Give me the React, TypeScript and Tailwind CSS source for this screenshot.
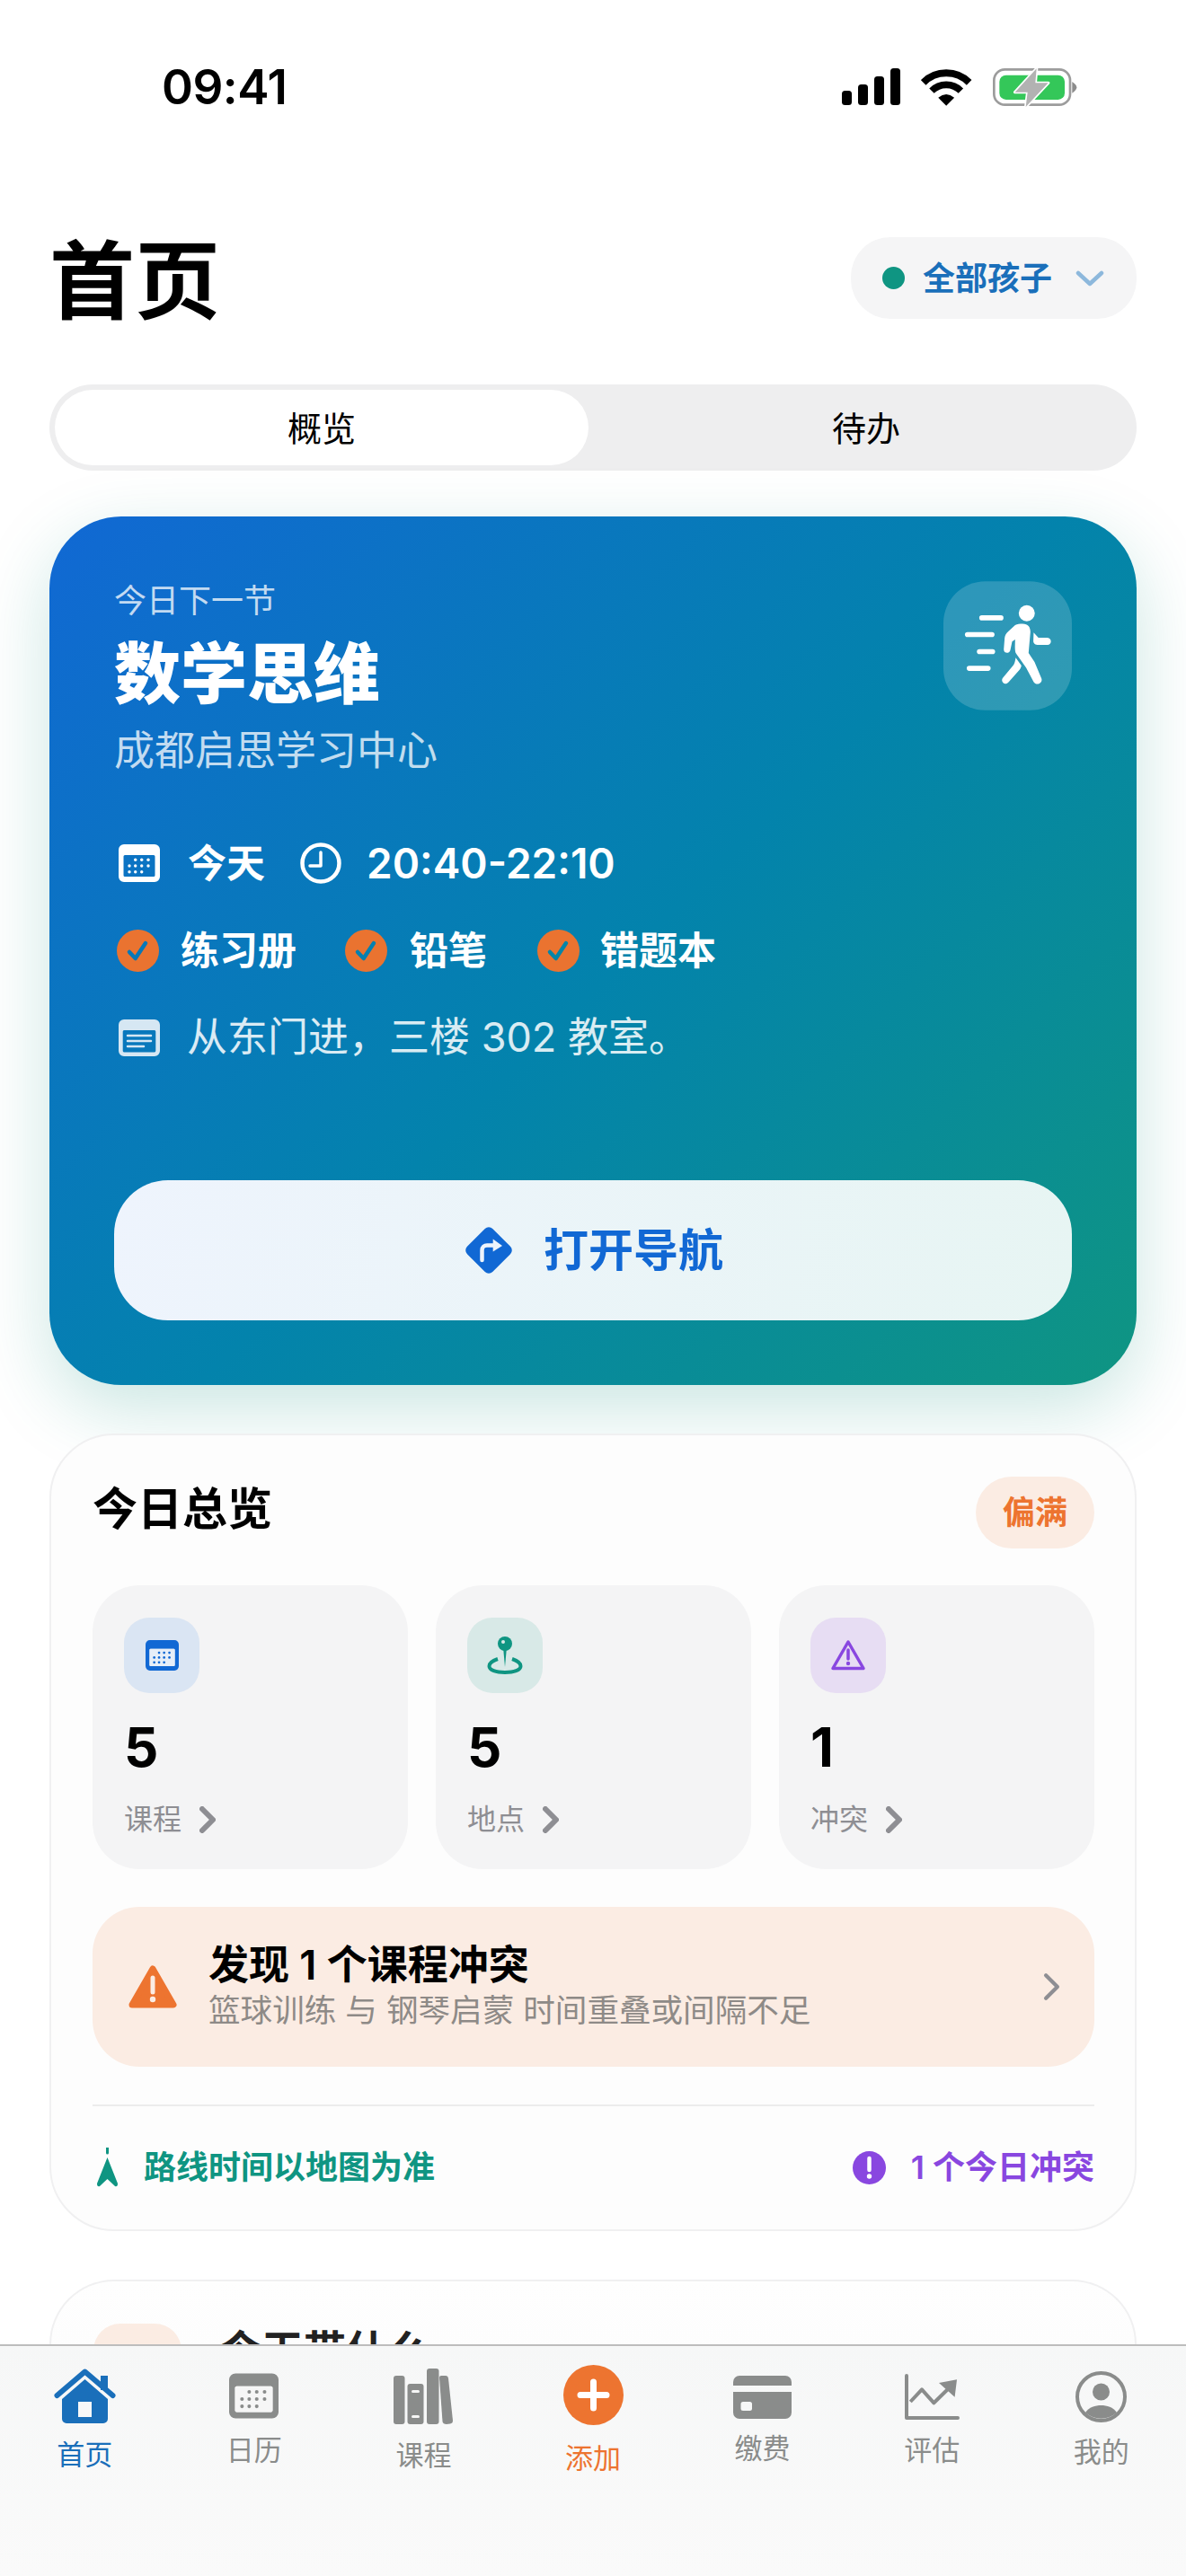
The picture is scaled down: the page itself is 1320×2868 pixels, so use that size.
import React from "react";

const GRAY = "#8a8c8b";

function Chevron({ className = "", color = "#8e8e93", w = 6 }: { className?: string; color?: string; w?: number }) {
  return (
    <svg viewBox="0 0 18 30" className={className} fill="none">
      <path d="M3 3 L15 15 L3 27" stroke={color} strokeWidth={w} strokeLinecap="round" strokeLinejoin="round" />
    </svg>
  );
}

function Cal({ className, frame, inner, dot }: { className: string; frame: string; inner?: string; dot: string }) {
  const pts: [number, number][] = [
    [18.7, 17.3], [25.7, 17.3], [33, 17.3],
    [12, 24], [18.7, 24], [25.7, 24], [33, 24],
    [12, 30.7], [18.7, 30.7], [25.7, 30.7],
  ];
  return (
    <svg viewBox="0 0 46 42" className={className}>
      <path
        fillRule="evenodd"
        fill={frame}
        d="M6 0H40A6 6 0 0 1 46 6V36A6 6 0 0 1 40 42H6A6 6 0 0 1 0 36V6A6 6 0 0 1 6 0ZM7 12A1.5 1.5 0 0 0 5.500 13.500V34.500A1.500 1.500 0 0 0 7 36H39A1.500 1.500 0 0 0 40.500 34.500V13.500A1.500 1.500 0 0 0 39 12Z"
      />
      {inner && <rect x="5.5" y="12" width="35" height="24" rx="1.500" fill={inner} />}
      {pts.map((p, i) => (
        <circle key={i} cx={p[0]} cy={p[1]} r="1.700" fill={dot} />
      ))}
    </svg>
  );
}

function Check({ stroke }: { stroke: string }) {
  return (
    <svg viewBox="0 0 47 47" className="h-[47px] w-[47px] shrink-0">
      <circle cx="23.5" cy="23.5" r="23.5" fill="#ea7330" />
      <path d="M14 25 L20.700 32 L32 15" fill="none" stroke={stroke} strokeWidth="4.500" strokeLinecap="round" strokeLinejoin="round" />
    </svg>
  );
}

function Walker() {
  return (
    <svg viewBox="450 200 430 432" className="h-[144px] w-[143px]">
      <rect x="450" y="200" width="430" height="432" rx="140" fill="#ffffff" fillOpacity="0.17" />
      <g fill="#fff">
        <rect x="570" y="314" width="81" height="17" rx="8.500" />
        <rect x="522" y="370" width="99" height="17" rx="8.500" />
        <rect x="562" y="427" width="61" height="17" rx="8.500" />
        <rect x="528" y="483" width="80" height="17" rx="8.500" />
        <circle cx="729" cy="307" r="27" />
        <path d="M715 342C735 342 742 355 741 372L735 440L755 470L778 525C784 540 762 552 752 537L727 490L692 440C688 430 690 410 690 395L680 402L674 430C672 443 652 443 652 428L655 390C656 380 660 375 668 367L690 347C697 343 705 342 715 342Z" />
        <path d="M692 456L711 482C710 490 706 495 700 502L668 538C656 552 638 535 650 522L685 480C690 472 690 465 692 456Z" />
        <path d="M752 372L768 389L798 389C814 390 814 413 798 413L768 413C758 413 751 408 751 400Z" />
      </g>
    </svg>
  );
}

function StatusIcons() {
  return (
    <div className="flex items-start">
      <svg viewBox="0 0 65 41" className="mt-[1px] h-[41px] w-[65px]">
        <rect x="0" y="25" width="11" height="16" rx="3.500" />
        <rect x="18" y="18" width="11" height="23" rx="3.500" />
        <rect x="36" y="9" width="11" height="32" rx="3.500" />
        <rect x="54" y="0" width="11" height="41" rx="3.500" />
      </svg>
      <svg viewBox="300 72 172 130" className="ml-[23px] h-[43px] w-[57px]">
        <path d="M308 123A109 109 0 0 1 462 123" fill="none" stroke="#000" strokeWidth="24" />
        <path d="M336 151A69 69 0 0 1 434 151" fill="none" stroke="#000" strokeWidth="23" />
        <path d="M385 201L358 174Q385 152 412 174Z" fill="#000" />
      </svg>
      <svg viewBox="540 72 282 135" className="ml-[23px] h-[45px] w-[94px]">
        <rect x="544" y="79" width="254" height="118" rx="36" fill="#fff" stroke="#9c9c9c" strokeWidth="8" />
        <rect x="562" y="98" width="218" height="82" rx="22" fill="#34c759" />
        <path d="M805 120Q820 130 820 139Q820 148 805 158Z" fill="#8c8c8c" />
        <path
          d="M686 76L614 155H656L650 204L725 124H682Z"
          fill="#b2b2b2"
          stroke="#fff"
          strokeWidth="10"
          strokeLinejoin="round"
          paintOrder="stroke"
        />
      </svg>
    </div>
  );
}

function Stat({ box, icon, num, label }: { box: string; icon: React.ReactNode; num: string; label: string }) {
  return (
    <div className="flex h-[316px] flex-col rounded-[52px] bg-[#f4f4f5] pl-[35px] pt-[36px]">
      <div className={`flex h-[84px] w-[84px] items-center justify-center rounded-[28px] ${box}`}>{icon}</div>
      <div className="mt-[24px] h-[72px] text-[60px] font-bold leading-[72px] text-black">{num}</div>
      <div className="mt-[25px] flex h-[40px] items-center">
        <span className="text-[32px] leading-[40px] text-[#8e8e93]">{label}</span>
        <Chevron className="ml-[20px] h-[30px] w-[18px]" />
      </div>
    </div>
  );
}

function Tab({ icon, label, color, gap = "mt-[19px]" }: { icon: React.ReactNode; label: string; color: string; gap?: string }) {
  return (
    <div className="flex flex-1 flex-col items-center">
      {icon}
      <div className={`${gap} text-[31px] leading-[32px] ${color}`}>{label}</div>
    </div>
  );
}

export default function App() {
  return (
    <div className="relative h-[2868px] w-[1320px] overflow-hidden bg-white text-black [font-family:Inter,'Noto_Sans_CJK_SC',sans-serif]">
      <div className="flex h-[264px] items-start justify-between pl-[180px] pr-[121px] pt-[75px]">
        <div className="text-[53px] font-semibold leading-[44px] tracking-[-0.5px]">09:41</div>
        <StatusIcons />
      </div>

      <div className="mx-[55px] flex h-[91px] items-center justify-between">
        <h1 className="pt-[8px] text-[95px] font-bold leading-[100px]">首页</h1>
        <div className="flex h-[91px] w-[318px] items-center rounded-[44px] bg-[#f5f5f6] pl-[35px]">
          <span className="h-[25px] w-[25px] rounded-full bg-[#0f9582]" />
          <span className="ml-[20px] text-[36px] font-bold leading-[44px] text-[#1a6fba]">全部孩子</span>
          <svg viewBox="0 0 32 18" className="ml-[26px] h-[18px] w-[32px]" fill="none">
            <path d="M3 3L16 15L29 3" stroke="#8db8dc" strokeWidth="4.500" strokeLinecap="round" strokeLinejoin="round" />
          </svg>
        </div>
      </div>

      <div className="mx-[55px] mt-[73px] flex h-[96px] rounded-[48px] bg-[#eeeeef] p-[6px]">
        <div className="flex w-[594px] items-center justify-center rounded-[42px] bg-white pl-[-2px] pt-[2px] text-[38px] leading-[44px]">概览</div>
        <div className="flex flex-1 items-center justify-center pl-[14px] pt-[2px] text-[38px] leading-[44px]">待办</div>
      </div>

      <div className="mx-[55px] mt-[51px] flex h-[967px] flex-col rounded-[80px] bg-[linear-gradient(135deg,#1168d4_0%,#0383ac_52%,#0f9582_100%)] px-[72px] pb-[72px] pt-[72px] shadow-[0_26px_80px_rgba(15,140,125,0.22)]">
        <div className="flex items-start justify-between">
          <div>
            <div className="h-[44px] text-[36px] leading-[44px] text-white/75">今日下一节</div>
            <div className="mt-[15px] h-[88px] text-[74px] font-black leading-[88px] text-white">数学思维</div>
            <div className="mt-[14px] h-[56px] text-[45px] leading-[56px] text-white/75">成都启思学习中心</div>
          </div>
          <Walker />
        </div>

        <div className="mt-[72px] flex h-[50px] items-center pl-[5px] text-white">
          <Cal className="h-[42px] w-[46px]" frame="#fff" dot="#fff" />
          <span className="ml-[31px] text-[43px] font-semibold leading-[50px]">今天</span>
          <svg viewBox="0 0 46 46" className="ml-[39px] h-[46px] w-[46px]" fill="none" stroke="#fff" strokeWidth="4.500">
            <circle cx="23" cy="23" r="20.500" />
            <path d="M23 11V26H11" strokeLinecap="round" strokeLinejoin="round" strokeWidth="3.500" />
          </svg>
          <span className="ml-[28px] text-[46px] font-semibold leading-[50px]">20:40-22:10</span>
        </div>

        <div className="mt-[47px] flex h-[50px] items-center pl-[3px] text-[43px] font-semibold leading-[50px] text-white">
          <Check stroke="#0578b8" />
          <span className="ml-[24px]">练习册</span>
          <span className="ml-[54px]"><Check stroke="#0580b0" /></span>
          <span className="ml-[25px]">铅笔</span>
          <span className="ml-[56px]"><Check stroke="#0385a8" /></span>
          <span className="ml-[23px]">错题本</span>
        </div>

        <div className="mt-[47px] flex h-[50px] items-center pl-[5px]">
          <svg viewBox="0 0 46 41" className="h-[41px] w-[46px] shrink-0">
            <path
              fillRule="evenodd"
              fill="#d6e7f3"
              d="M6 0H40A6 6 0 0 1 46 6V35A6 6 0 0 1 40 41H6A6 6 0 0 1 0 35V6A6 6 0 0 1 6 0ZM6 12A1.500 1.500 0 0 0 4.700 13.500V35A1.500 1.500 0 0 0 6 36.500H40A1.500 1.500 0 0 0 41.300 35V13.500A1.500 1.500 0 0 0 40 12Z"
            />
            <path d="M10 18H36M10 24H36M10 30H28" stroke="#d6e7f3" strokeWidth="2.500" strokeLinecap="round" />
          </svg>
          <span className="ml-[30px] text-[45px] leading-[50px] text-white/85">从东门进，三楼 302 教室。</span>
        </div>

        <div className="mt-auto flex h-[156px] items-center justify-center rounded-[60px] bg-[linear-gradient(100deg,#eef4fd,#e7f5f3)]">
          <svg viewBox="0 0 58 58" className="h-[58px] w-[58px]">
            <rect x="9" y="9" width="40" height="40" rx="6" fill="#1168d4" transform="rotate(45 29 29)" />
            <path d="M21.500 40V29C21.500 25.500 24 23.500 27 23.500H35" fill="none" stroke="#eef4fb" strokeWidth="4.500" strokeLinecap="round" />
            <path d="M33.700 16.500L44 24L33.700 30.500Z" fill="#eef4fb" />
          </svg>
          <span className="ml-[32px] text-[50px] font-semibold leading-[60px] text-[#1168d4]">打开导航</span>
        </div>
      </div>

      <div className="mx-[55px] mt-[54px] h-[888px] rounded-[72px] border-2 border-[#f0f0f1] bg-[#fdfdfd] pl-[46px] pr-[45px] pt-[46px]">
        <div className="flex h-[80px] items-center justify-between">
          <span className="pb-[8px] text-[50px] font-semibold leading-[60px]">今日总览</span>
          <span className="flex h-[80px] w-[132px] items-center justify-center rounded-[40px] bg-[#fbece3] text-[36px] font-semibold text-[#ed7430]">偏满</span>
        </div>

        <div className="mt-[41px] grid grid-cols-3 gap-[31px]">
          <Stat
            box="bg-[#dae5f3]"
            num="5"
            label="课程"
            icon={<Cal className="h-[34px] w-[37px]" frame="#1168d4" inner="#e6eef8" dot="#1168d4" />}
          />
          <Stat
            box="bg-[#d8e9e7]"
            num="5"
            label="地点"
            icon={
              <svg viewBox="0 0 40 42" className="h-[42px] w-[40px]">
                <path d="M12 25C6 27 2.500 29 2.500 33C2.500 37.500 10 40 20 40C30 40 37.500 37.500 37.500 33C37.500 29 34 27 28 25" fill="none" stroke="#0f9582" strokeWidth="4" />
                <circle cx="20" cy="8" r="8" fill="#0f9582" />
                <path d="M18.200 14H21.800L20 34Z" fill="#0f9582" />
                <circle cx="18" cy="6" r="2" fill="#d8e9e7" />
              </svg>
            }
          />
          <Stat
            box="bg-[#e7ddf3]"
            num="1"
            label="冲突"
            icon={
              <svg viewBox="0 0 40 36" className="h-[36px] w-[40px]">
                <path d="M20 3L37 32.500H3Z" fill="none" stroke="#8947e0" strokeWidth="3.500" strokeLinejoin="round" />
                <path d="M20 12V22" stroke="#8947e0" strokeWidth="3.500" strokeLinecap="round" />
                <circle cx="20" cy="27" r="2.200" fill="#8947e0" />
              </svg>
            }
          />
        </div>

        <div className="mt-[42px] flex h-[178px] items-center rounded-[52px] bg-[#fbece3] pl-[40px] pr-[37px]">
          <svg viewBox="0 0 54 49" className="h-[49px] w-[54px] shrink-0">
            <path d="M27 4L50 44H4Z" fill="#ed7430" stroke="#ed7430" strokeWidth="7" strokeLinejoin="round" />
            <path d="M27 14V30" stroke="#fbece3" strokeWidth="5" strokeLinecap="round" />
            <circle cx="27" cy="38" r="3.200" fill="#fbece3" />
          </svg>
          <div className="ml-[35px] flex-1">
            <div className="h-[50px] text-[45px] font-semibold leading-[50px]">发现 1 个课程冲突</div>
            <div className="mt-[4px] h-[44px] text-[35.600px] leading-[44px] text-[#8e8a87]">篮球训练 与 钢琴启蒙 时间重叠或间隔不足</div>
          </div>
          <Chevron className="h-[32px] w-[21px]" w={4} />
        </div>

        <div className="mt-[42px] h-[2px] bg-[#ececec]" />

        <div className="mt-[43px] flex h-[50px] items-center justify-between">
          <div className="flex items-center">
            <svg viewBox="0 0 25 44" className="ml-[4px] h-[44px] w-[25px]">
              <path d="M12.500 0V6" stroke="#0f9582" strokeWidth="3" strokeLinecap="round" />
              <path d="M12.500 11L24 40Q24 44 21 43L12.500 35L4 43Q1 44 1 40Z" fill="#0f9582" />
            </svg>
            <span className="ml-[28px] text-[36px] font-semibold leading-[44px] text-[#0f9582]">路线时间以地图为准</span>
          </div>
          <div className="flex items-center">
            <svg viewBox="0 0 37 37" className="h-[37px] w-[37px]">
              <circle cx="18.5" cy="18.5" r="18.5" fill="#8947e0" />
              <path d="M18.500 8V21" stroke="#fff" strokeWidth="4.500" strokeLinecap="round" />
              <circle cx="18.5" cy="28" r="2.700" fill="#fff" />
            </svg>
            <span className="ml-[28px] text-[36px] font-semibold leading-[44px] text-[#8947e0]">1 个今日冲突</span>
          </div>
        </div>
      </div>

      <div className="mx-[55px] mt-[54px] h-[300px] rounded-t-[72px] border-2 border-b-0 border-[#f0f0f1] bg-[linear-gradient(#fefefe,#fafafa)] pl-[47px] pt-[47px]">
        <div className="flex items-start">
          <div className="h-[98px] w-[98px] rounded-[30px] bg-[#fbece3]" />
          <div className="ml-[42px] text-[47px] font-semibold leading-[60px] text-[#222]">今天带什么</div>
        </div>
      </div>

      <div className="absolute inset-x-0 bottom-0 h-[258px] border-t-2 border-[#bdbdbd] bg-[linear-gradient(#f6f7f7,#fafafa)]">
        <div className="flex h-[162px] items-center">
          <Tab
            label="首页"
            color="text-[#1a6fba]"
            icon={
              <svg viewBox="0 0 69 61" className="h-[61px] w-[69px]">
                <path d="M52 8H60V24H52Z" fill="#1a6fba" />
                <path d="M3.500 30L34.500 3.500L65.500 30" fill="none" stroke="#1a6fba" strokeWidth="6" strokeLinecap="round" strokeLinejoin="round" />
                <path fillRule="evenodd" d="M34.500 12L60 34V56A5 5 0 0 1 55 61H14A5 5 0 0 1 9 56V34ZM27 37V54H42V37Z" fill="#1a6fba" />
              </svg>
            }
          />
          <Tab
            label="日历"
            color="text-[#8a8c8b]"
            icon={<Cal className="h-[51px] w-[55px]" frame={GRAY} inner="#f6f6f6" dot={GRAY} />}
          />
          <Tab
            label="课程"
            color="text-[#8a8c8b]"
            icon={
              <svg viewBox="0 0 66 62" className="h-[62px] w-[66px]">
                <rect x="0" y="8" width="12.500" height="54" rx="3" fill={GRAY} />
                <rect x="15.500" y="17" width="18" height="45" rx="3" fill={GRAY} />
                <rect x="20" y="24" width="9" height="3" rx="1.500" fill="#f6f6f6" />
                <rect x="20" y="52" width="9" height="3" rx="1.500" fill="#f6f6f6" />
                <rect x="37" y="0" width="13.500" height="62" rx="3" fill={GRAY} />
                <path d="M51 10Q51 8 53 8L58 8Q60.500 8 61 11L66 58Q66 61 63 61.500L59 62Q55 62 54.500 59Z" fill={GRAY} />
              </svg>
            }
          />
          <Tab
            label="添加"
            color="text-[#ed7430]"
            gap="mt-[21px]"
            icon={
              <svg viewBox="0 0 67 67" className="h-[67px] w-[67px]">
                <circle cx="33.5" cy="33.5" r="33.5" fill="#ed7430" />
                <path d="M33.500 19V48M19 33.500H48" stroke="#fff" strokeWidth="7" strokeLinecap="round" />
              </svg>
            }
          />
          <Tab
            label="缴费"
            color="text-[#8a8c8b]"
            gap="mt-[17px]"
            icon={
              <svg viewBox="0 0 65 48" className="h-[48px] w-[65px]">
                <path d="M0 11V7A7 7 0 0 1 7 0H58A7 7 0 0 1 65 7V11Z" fill={GRAY} />
                <path fillRule="evenodd" d="M0 18H65V41A7 7 0 0 1 58 48H7A7 7 0 0 1 0 41ZM11 29A2.500 2.500 0 0 0 8.500 31.500V36.500A2.500 2.500 0 0 0 11 39H18.500A2.500 2.500 0 0 0 21 36.500V31.500A2.500 2.500 0 0 0 18.500 29Z" fill={GRAY} />
              </svg>
            }
          />
          <Tab
            label="评估"
            color="text-[#8a8c8b]"
            gap="mt-[18px]"
            icon={
              <svg viewBox="0 0 61 51" className="h-[51px] w-[61px]">
                <path d="M2 2V49H59" fill="none" stroke={GRAY} strokeWidth="4" strokeLinecap="round" strokeLinejoin="round" />
                <path d="M6.300 31L19 17.300L32.400 32.300L50 15" fill="none" stroke={GRAY} strokeWidth="4" strokeLinejoin="round" />
                <path d="M38 10L58 6.300L55.600 25.700Z" fill={GRAY} />
              </svg>
            }
          />
          <Tab
            label="我的"
            color="text-[#8a8c8b]"
            gap="mt-[17px]"
            icon={
              <svg viewBox="0 0 57 57" className="h-[57px] w-[57px]">
                <circle cx="28.5" cy="28.5" r="26.500" fill="none" stroke={GRAY} strokeWidth="4" />
                <circle cx="28.5" cy="23" r="9.500" fill={GRAY} />
                <path d="M11 46C15 40 22 38 28.500 38C35 38 42 40 46 46A26 26 0 0 1 11 46Z" fill={GRAY} />
              </svg>
            }
          />
        </div>
      </div>
    </div>
  );
}
